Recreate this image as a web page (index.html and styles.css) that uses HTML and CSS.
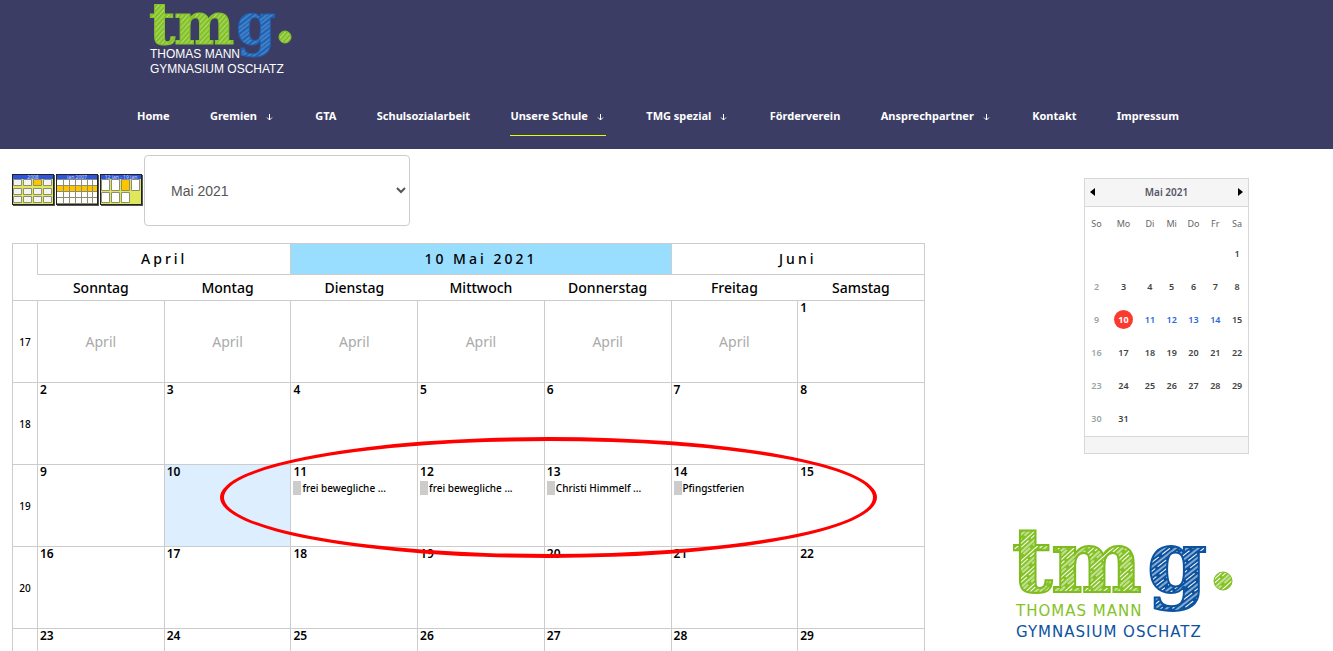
FILE: index.html
```html
<!DOCTYPE html>
<html lang="de">
<head>
  <meta charset="UTF-8">
  <meta name="viewport" content="width=device-width, initial-scale=1">
  <title>Thomas Mann Gymnasium Oschatz</title>
  <link rel="stylesheet" href="styles.css">
</head>
<body>

<header class="site-header">
  <a class="brand" href="#">
    <svg width="150" height="82" viewBox="0 0 150 82" role="img" aria-label="tmg">
      <defs>
        <pattern id="hatchLime" width="7" height="7" patternUnits="userSpaceOnUse" patternTransform="rotate(-48)">
          <rect width="7" height="7" fill="#82c126"/>
          <path d="M0 1H7M0 4.500H7" stroke="#c3e48e" stroke-width=".8"/>
        </pattern>
        <pattern id="hatchSky" width="7" height="7" patternUnits="userSpaceOnUse" patternTransform="rotate(-38)">
          <rect width="7" height="7" fill="#1c62b4"/>
          <path d="M0 1H7M0 4H7" stroke="#7fa9dc" stroke-width=".8"/>
        </pattern>
      </defs>
      <g class="mark mark-small">
        <text x="1" y="44" fill="url(#hatchLime)" stroke="#86c32a">t</text>
        <text x="26" y="44" fill="url(#hatchLime)" stroke="#86c32a">m</text>
        <text x="88" y="44" fill="url(#hatchSky)" stroke="#1c62b4">g</text>
      </g>
      <circle cx="137" cy="37" r="6" fill="url(#hatchLime)" stroke="#86c32a"/>
      <text class="mark-caption" x="2" y="58">THOMAS MANN</text>
      <text class="mark-caption" x="2" y="73">GYMNASIUM OSCHATZ</text>
    </svg>
  </a>
  <nav class="menu">
    <a href="#">Home</a>
    <a href="#">Gremien <svg class="arrow" viewBox="0 0 7 7"><path d="M3.500 0V6M1 3.500L3.500 6L6 3.500"/></svg></a>
    <a href="#">GTA</a>
    <a href="#">Schulsozialarbeit</a>
    <a class="active" href="#">Unsere Schule <svg class="arrow" viewBox="0 0 7 7"><path d="M3.500 0V6M1 3.500L3.500 6L6 3.500"/></svg></a>
    <a href="#">TMG spezial <svg class="arrow" viewBox="0 0 7 7"><path d="M3.500 0V6M1 3.500L3.500 6L6 3.500"/></svg></a>
    <a href="#">Förderverein</a>
    <a href="#">Ansprechpartner <svg class="arrow" viewBox="0 0 7 7"><path d="M3.500 0V6M1 3.500L3.500 6L6 3.500"/></svg></a>
    <a href="#">Kontakt</a>
    <a href="#">Impressum</a>
  </nav>
</header>

<div class="page">
  <main>
    <form class="toolbar">
      <a href="#" aria-label="Jahr">
        <svg width="44" height="34" viewBox="0 0 44 34">
          <rect x="1" y="1" width="42" height="31" fill="#555"/>
          <rect x=".5" y=".5" width="41" height="30" fill="#dfe85c" stroke="#222"/>
          <rect x="1" y="1" width="40" height="4" fill="#2c55e0"/>
          <text class="icon-text" x="21" y="5">2008</text>
          <g fill="#f4f4f4" stroke="#8d8d70">
            <path d="M1.500 5.500h8v6h-8zM11.500 5.500h8v6h-8zM31.500 5.500h8v6h-8zM1.500 14.500h8v6h-8zM11.500 14.500h8v6h-8zM21.500 14.500h8v6h-8zM31.500 14.500h8v6h-8zM1.500 22.500h8v6h-8zM11.500 22.500h8v6h-8zM21.500 22.500h8v6h-8zM31.500 22.500h8v6h-8z"/>
            <path fill="#ffc400" d="M21.500 5.500h8v6h-8z"/>
          </g>
        </svg>
      </a>
      <a href="#" aria-label="Monat">
        <svg width="44" height="34" viewBox="0 0 44 34">
          <rect x="1" y="1" width="42" height="31" fill="#555"/>
          <rect x=".5" y=".5" width="41" height="30" fill="#fff" stroke="#222"/>
          <rect x="1" y="1" width="40" height="4" fill="#2c55e0"/>
          <text class="icon-text" x="21" y="5">jan 2007</text>
          <rect x="1" y="11" width="40" height="7" fill="#ffc400"/>
          <path fill="none" stroke="#8d8d70" d="M1 5.500h40M1 11.500h40M1 17.500h40M1 23.500h40M1 29.500h40M7.500 5v25M13.500 5v25M19.500 5v25M25.500 5v25M31.500 5v25M36.500 5v25"/>
        </svg>
      </a>
      <a href="#" aria-label="Woche">
        <svg width="44" height="34" viewBox="0 0 44 34">
          <rect x="1" y="1" width="42" height="31" fill="#555"/>
          <rect x=".5" y=".5" width="41" height="30" fill="#dfe85c" stroke="#222"/>
          <rect x="1" y="1" width="40" height="4" fill="#2c55e0"/>
          <text class="icon-text" x="21" y="5">12 jan - 19 jan</text>
          <g fill="#fff" stroke="#8d8d70">
            <path d="M1.500 5.500h8v11h-8zM11.500 5.500h8v11h-8zM31.500 5.500h8v11h-8zM1.500 18.500h8v10h-8zM11.500 18.500h8v10h-8zM21.500 18.500h8v10h-8z"/>
            <path fill="#ffc400" d="M21.500 5.500h8v11h-8z"/>
          </g>
        </svg>
      </a>
      <select class="month-select" aria-label="Monat wählen">
        <option>Mai 2021</option>
      </select>
    </form>

    <div class="calendar-wrap">
      <table class="calendar">
        <colgroup><col class="col-week"><col span="7"></colgroup>
        <thead>
          <tr class="months">
            <td></td>
            <th colspan="2">April</th>
            <th class="current" colspan="3">10 Mai 2021</th>
            <th colspan="2">Juni</th>
          </tr>
          <tr class="weekdays">
            <td></td><th>Sonntag</th><th>Montag</th><th>Dienstag</th><th>Mittwoch</th><th>Donnerstag</th><th>Freitag</th><th>Samstag</th>
          </tr>
        </thead>
        <tbody>
          <tr>
            <th>17</th>
            <td class="other">April</td><td class="other">April</td><td class="other">April</td><td class="other">April</td><td class="other">April</td><td class="other">April</td>
            <td>1</td>
          </tr>
          <tr>
            <th>18</th><td>2</td><td>3</td><td>4</td><td>5</td><td>6</td><td>7</td><td>8</td>
          </tr>
          <tr>
            <th>19</th>
            <td>9</td>
            <td class="today">10</td>
            <td>11<a class="event" href="#">frei bewegliche ...</a></td>
            <td>12<a class="event" href="#">frei bewegliche ...</a></td>
            <td>13<a class="event" href="#">Christi Himmelf ...</a></td>
            <td>14<a class="event" href="#">Pfingstferien</a></td>
            <td>15</td>
          </tr>
          <tr>
            <th>20</th><td>16</td><td>17</td><td>18</td><td>19</td><td>20</td><td>21</td><td>22</td>
          </tr>
          <tr>
            <th></th><td>23</td><td>24</td><td>25</td><td>26</td><td>27</td><td>28</td><td>29</td>
          </tr>
        </tbody>
      </table>
      <div class="highlight"></div>
    </div>
  </main>

  <aside class="sidebar">
    <section class="mini">
      <div class="mini-head">
        <button type="button" aria-label="Vorheriger Monat"><svg width="5" height="8" viewBox="0 0 5 8"><path d="M5 0V8L0 4z"/></svg></button>
        <span>Mai 2021</span>
        <button type="button" aria-label="Nächster Monat"><svg width="5" height="8" viewBox="0 0 5 8"><path d="M0 0V8L5 4z"/></svg></button>
      </div>
      <table>
        <colgroup><col class="col-so"><col class="col-mo"><col span="5"></colgroup>
        <thead>
          <tr><th>So</th><th>Mo</th><th>Di</th><th>Mi</th><th>Do</th><th>Fr</th><th>Sa</th></tr>
        </thead>
        <tbody>
          <tr><td></td><td></td><td></td><td></td><td></td><td></td><td>1</td></tr>
          <tr><td>2</td><td>3</td><td>4</td><td>5</td><td>6</td><td>7</td><td>8</td></tr>
          <tr><td>9</td><td><span class="now">10</span></td><td><a href="#">11</a></td><td><a href="#">12</a></td><td><a href="#">13</a></td><td><a href="#">14</a></td><td>15</td></tr>
          <tr><td>16</td><td>17</td><td>18</td><td>19</td><td>20</td><td>21</td><td>22</td></tr>
          <tr><td>23</td><td>24</td><td>25</td><td>26</td><td>27</td><td>28</td><td>29</td></tr>
          <tr><td>30</td><td>31</td><td></td><td></td><td></td><td></td><td></td></tr>
        </tbody>
      </table>
      <div class="mini-foot"></div>
    </section>

    <svg class="logo" width="236" height="124" viewBox="0 0 236 124" role="img" aria-label="tmg">
      <defs>
        <pattern id="hatchGreen" width="13" height="13" patternUnits="userSpaceOnUse" patternTransform="rotate(-42)">
          <rect width="13" height="13" fill="#85c226"/>
          <path d="M0 1H13M0 4H9M0 7.500H13M3 10.500H13" stroke="#fff"/>
        </pattern>
        <pattern id="hatchBlue" width="14" height="14" patternUnits="userSpaceOnUse" patternTransform="rotate(-38)">
          <rect width="14" height="14" fill="#0b52a0"/>
          <path d="M0 1H14M0 4.500H10M0 8H14M3 11.500H14" stroke="#fff"/>
        </pattern>
      </defs>
      <g class="mark">
        <text class="tall" x="-2" y="69" fill="url(#hatchGreen)" stroke="#7dbb1e">t</text>
        <text x="38" y="69" fill="url(#hatchGreen)" stroke="#7dbb1e">m</text>
        <text x="134" y="69" fill="url(#hatchBlue)" stroke="#0b52a0">g</text>
      </g>
      <circle cx="210" cy="58" r="9" fill="url(#hatchGreen)" stroke="#7dbb1e"/>
      <text class="logo-caption green" x="3" y="93">THOMAS MANN</text>
      <text class="logo-caption blue" x="3" y="114">GYMNASIUM OSCHATZ</text>
    </svg>
  </aside>
</div>

</body>
</html>
```
FILE: styles.css
```css
* {
  box-sizing: border-box;
}

body {
  margin: 0;
  height: 100vh;
  overflow: hidden;
  background: #fff;
  color: #000;
  font-family: 'Noto Sans', sans-serif;
  font-size: 12px;
}

a {
  color: inherit;
  text-decoration: none;
}

svg {
  display: block;
}

/* header */
.site-header {
  height: 149px;
  padding: 0 154px 0 137px;
  background: #3c3d65;
  color: #fff;
}

.brand {
  display: block;
  width: 150px;
  margin-left: 11px;
}

.mark {
  font-family: 'DejaVu Serif', serif;
  font-weight: 700;
  font-size: 86px;
  stroke-width: 2px;
}

.mark .tall {
  font-size: 90px;
}

.mark-small {
  font-size: 57px;
  stroke-width: 1px;
}

.mark-caption {
  font-family: 'Liberation Sans', sans-serif;
  font-size: 12px;
  fill: #fff;
}

.menu {
  display: flex;
  justify-content: space-between;
  padding-top: 14px;
}

.menu a {
  display: flex;
  align-items: center;
  gap: 9px;
  height: 40px;
  font-size: 11px;
  font-weight: 700;
  white-space: nowrap;
  border-bottom: 1px solid transparent;
}

.menu a.active {
  border-bottom-color: #e8ff00;
}

.arrow {
  width: 7px;
  height: 7px;
  margin: 4px 2px 0 0;
  fill: none;
  stroke: #fff;
}

/* layout */
.page {
  display: grid;
  grid-template-columns: 1fr 236px;
  column-gap: 88px;
  padding: 6px 84px 0 12px;
}

.toolbar {
  display: flex;
  align-items: center;
}

.icon-text {
  font-size: 5px;
  fill: #cdd8ff;
  text-anchor: middle;
}

.month-select {
  width: 266px;
  height: 71px;
  padding: 0 22px;
  border: 1px solid #ccc;
  border-radius: 4px;
  background: #fff;
  color: #555;
  font-family: 'Liberation Sans', sans-serif;
  font-size: 14px;
}

/* month calendar */
.calendar-wrap {
  position: relative;
  margin-top: 17px;
}

.calendar {
  width: 100%;
  table-layout: fixed;
  border-collapse: collapse;
  border: 1px solid #ccc;
}

.col-week {
  width: 25px;
}

.months th {
  height: 31px;
  padding: 0 0 2px;
  border: 1px solid #ccc;
  font-size: 14px;
  font-weight: 500;
  letter-spacing: 3px;
}

.months .current {
  background: #99ddff;
}

.weekdays th {
  height: 26px;
  padding: 0;
  font-size: 14px;
  font-weight: 500;
}

.calendar tbody th,
.calendar tbody td {
  height: 82px;
  border: 1px solid #ccc;
}

.calendar tbody th {
  padding: 0;
  font-size: 10px;
  font-weight: 500;
}

.calendar tbody td {
  padding: 0 2px;
  vertical-align: top;
  font-size: 12px;
  line-height: 14px;
  font-weight: 600;
}

.calendar tbody td.other {
  vertical-align: middle;
  text-align: center;
  color: #aaa;
  font-size: 14px;
  font-weight: 400;
}

.calendar tbody td.today {
  background: #ddeeff;
}

.event {
  display: block;
  margin-top: 2px;
  padding-left: 1px;
  border-left: 8px solid #ccc;
  font-size: 10px;
  line-height: 14px;
  font-weight: 500;
  white-space: nowrap;
}

.highlight {
  position: absolute;
  top: 194px;
  left: 208px;
  width: 72%;
  height: 121px;
  border: 4px solid #f00;
  border-radius: 50%;
}

/* sidebar */
.sidebar {
  display: flex;
  flex-direction: column;
  align-items: flex-end;
  padding-top: 23px;
}

.mini {
  width: 165px;
  border: 1px solid #d8d8d8;
  color: #444;
  font-size: 9px;
}

.mini-head {
  display: flex;
  align-items: center;
  justify-content: space-between;
  height: 28px;
  padding: 0 5px 2px;
  background: #f5f5f5;
  border-bottom: 1px solid #d8d8d8;
  color: #556;
  font-size: 10px;
  font-weight: 600;
}

.mini-head button {
  padding: 0;
  border: 0;
  background: none;
}

.mini table {
  width: 100%;
  table-layout: fixed;
  border-collapse: collapse;
}

.col-so {
  width: 23px;
}

.col-mo {
  width: 31px;
}

.mini th,
.mini td {
  height: 33px;
  padding: 0 0 2px;
  text-align: center;
  font-weight: 600;
}

.mini th {
  height: 31px;
  padding-top: 3px;
  color: #666;
  font-weight: 400;
}

.mini td:first-child {
  color: #9aa5a5;
}

.mini td a {
  color: #2a66dd;
}

.now {
  display: block;
  width: 19px;
  margin: 0 auto;
  border-radius: 50%;
  background: #fb3a2f;
  color: #fff;
  font-weight: 700;
  line-height: 19px;
}

.mini-foot {
  height: 17px;
  background: #f5f5f5;
  border-top: 1px solid #d8d8d8;
}

.logo {
  margin-top: 69px;
}

.logo-caption {
  font-family: 'DejaVu Sans', sans-serif;
  font-size: 15px;
  letter-spacing: 1px;
}

.green {
  fill: #85c226;
}

.blue {
  fill: #0b52a0;
}
```
